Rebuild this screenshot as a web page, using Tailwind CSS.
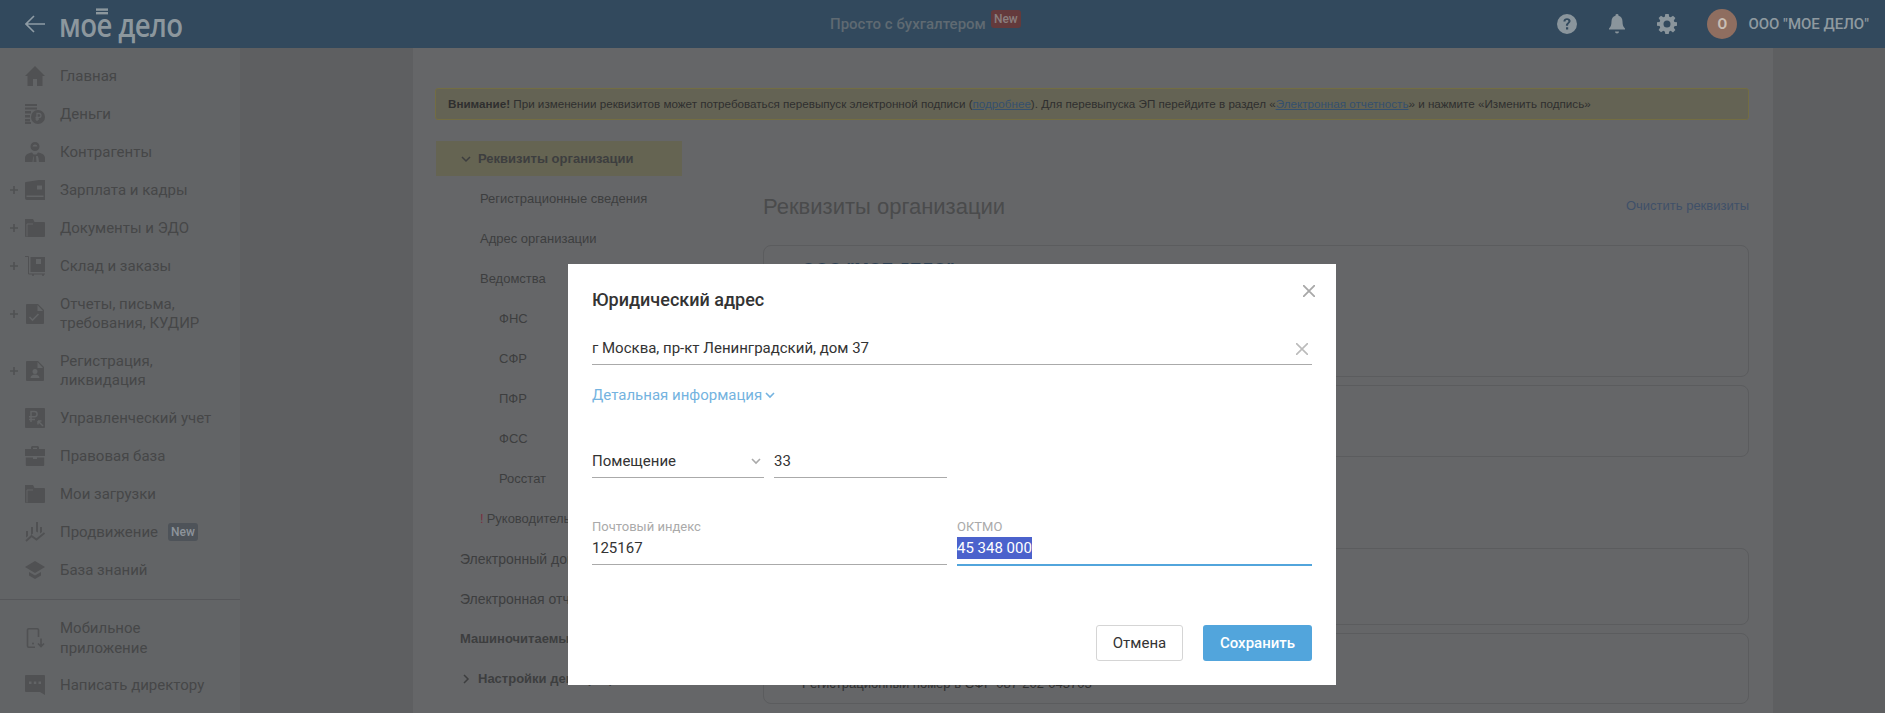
<!DOCTYPE html>
<html lang="ru">
<head>
    <meta charset="UTF-8">
    <title>Реквизиты организации</title>
    <script src="https://cdn.jsdelivr.net/npm/@tailwindcss/browser@4"></script>
</head>
<body class="relative h-screen overflow-hidden bg-[#5e5f61] font-['Roboto',sans-serif]">
    <!-- header -->
    <header class="flex h-12 items-center bg-[#32495d] pr-4">
        <div class="flex w-[830px] items-center pl-[25px]">
            <svg class="h-5 w-5 text-[#8f9ca5]" viewBox="0 0 20 20" fill="none" stroke="currentColor" stroke-width="1.6"><path d="M20 10H1M9 2l-8 8 8 8"/></svg>
            <div class="relative ml-[14px] scale-y-[1.2] text-[27.6px] leading-[46px] font-semibold tracking-[-0.6px] text-[#8c979d] font-['Open_Sans',sans-serif]">мое дело<span class="absolute left-[37px] top-[10px] h-[5px] w-[12px] border-y-2 border-[#8c979d]"></span></div>
        </div>
        <div class="text-[15px] font-medium text-[#5f6a72]">Просто с бухгалтером</div>
        <div class="mb-[10px] ml-[5px] flex h-[18px] w-[30px] items-center justify-center rounded-[3px] bg-[#643a3c] text-xs font-medium text-[#8a7f7f]">New</div>
        <div class="ml-auto flex items-center">
            <svg class="h-5 w-5 text-[#8a959c]" viewBox="0 0 20 20"><path fill="currentColor" fill-rule="evenodd" d="M10 0a10 10 0 1 1 0 20a10 10 0 0 1 0-20ZM9 13.2v2.3h2.2v-2.3ZM10 4.2c-2 0-3.5 1.2-3.6 3.2h2.1c0-.9.6-1.4 1.5-1.4s1.4.5 1.4 1.2c0 1.400-2.500 1.700-2.500 4.500h2.100c0-2.200 2.600-2.400 2.600-4.600c0-1.800-1.500-2.900-3.600-2.900Z"/></svg>
            <svg class="ml-[30px] h-5 w-5 text-[#8a959c]" viewBox="0 0 20 20"><path fill="currentColor" d="M10 0a1.500 1.500 0 0 1 1.500 1.700c2.700.7 4 3 4 5.800c0 4 1 5.500 2.500 7v1H2v-1c1.500-1.500 2.500-3 2.500-7c0-2.800 1.300-5.100 4-5.800A1.500 1.500 0 0 1 10 0ZM8 17.500h4a2 2 0 0 1-4 0Z"/></svg>
            <svg class="ml-[30px] h-5 w-5 text-[#8a959c]" viewBox="0 0 20 20"><path fill="currentColor" fill-rule="evenodd" d="M8.300 0h3.400l.5 2.700l1.500.6l2.300-1.600l2.400 2.400l-1.600 2.300l.6 1.500l2.600.4v3.400l-2.600.5l-.6 1.500l1.600 2.300l-2.400 2.400l-2.300-1.600l-1.500.6l-.5 2.600H8.300l-.5-2.600l-1.500-.6L4 18.300l-2.400-2.400l1.600-2.300l-.6-1.500L0 11.700V8.300l2.600-.4l.6-1.500l-1.600-2.300L4 1.700l2.300 1.600l1.500-.6ZM10 6.500a3.500 3.500 0 1 0 0 7a3.500 3.500 0 0 0 0-7Z"/></svg>
            <div class="ml-[30px] flex h-[30px] w-[30px] items-center justify-center rounded-full bg-[#8f6e60] text-sm font-bold text-[#c9beb5]">О</div>
            <div class="ml-[11px] text-[15px] font-medium text-[#8f9aa0]">ООО "МОЕ ДЕЛО"</div>
        </div>
    </header>

    <div class="flex">
        <!-- sidebar -->
        <aside class="h-[665px] w-60 shrink-0 bg-[#626466] pt-[9px] text-[15px] leading-[19px] text-[#464748]">
            <a class="flex h-[38px] items-center pl-[25px]"><svg class="mr-[15px] h-5 w-5 shrink-0 text-[#505153]" viewBox="0 0 20 20"><path fill="currentColor" d="M10 0l10 10h-2.500v10H12v-7H8v7H2.500V10H0Z"/></svg>Главная</a>
            <a class="flex h-[38px] items-center pl-[25px]"><svg class="mr-[15px] h-5 w-5 shrink-0 text-[#505153]" viewBox="0 0 20 20"><path fill="currentColor" d="M0 0h12v2H0ZM0 3.500h12v2H0ZM0 7h6v2.500H0ZM0 11h5v2.500H0ZM0 15h5v2.500H0ZM0 18h6v2H0Z"/><circle cx="13" cy="13" r="7" fill="currentColor"/><path stroke="#626466" stroke-width="1.300" fill="none" d="M12 17v-7.500h2a1.900 1.900 0 0 1 0 3.900h-3.500M10.500 15H14"/></svg>Деньги</a>
            <a class="flex h-[38px] items-center pl-[25px]"><svg class="mr-[15px] h-5 w-5 shrink-0 text-[#505153]" viewBox="0 0 20 20"><path fill="currentColor" fill-rule="evenodd" d="M10 0a4.500 4.500 0 1 1 0 9a4.500 4.500 0 0 1 0-9ZM10 2.500a2.500 2.500 0 0 0-2.500 2h5a2.500 2.500 0 0 0-2.500-2ZM0 20v-4c0-3 3-5 7-5.500l1.500 2h3l1.500-2c4 .5 7 2.500 7 5.500v4h-6l-.5-4l-.8-2H8.800L8 16l-.5 4Z"/><path fill="currentColor" d="M9 14h2l.5 6h-3Z"/></svg>Контрагенты</a>
            <a class="relative flex h-[38px] items-center pl-[25px]"><svg class="absolute left-[10px] h-2 w-2 text-[#505153]" viewBox="0 0 8 8" stroke="currentColor" stroke-width="1.600"><path d="M4 0v8M0 4h8"/></svg><svg class="mr-[15px] h-5 w-5 shrink-0 text-[#505153]" viewBox="0 0 20 20"><path fill="currentColor" fill-rule="evenodd" d="M1 2l13-2h6v20H2a2 2 0 0 1-2-2V3a1 1 0 0 1 1-1ZM12 5.500h5v4h-5ZM1.500 15.500v1.500h17v-1.500Z"/></svg>Зарплата и кадры</a>
            <a class="relative flex h-[38px] items-center pl-[25px]"><svg class="absolute left-[10px] h-2 w-2 text-[#505153]" viewBox="0 0 8 8" stroke="currentColor" stroke-width="1.600"><path d="M4 0v8M0 4h8"/></svg><svg class="mr-[15px] h-5 w-5 shrink-0 text-[#505153]" viewBox="0 0 20 20"><path fill="currentColor" d="M0 1h8l1.500 3H19a1 1 0 0 1 1 1v13a1 1 0 0 1-1 1H1a1 1 0 0 1-1-1Z"/><path stroke="#626466" fill="none" d="M2 18.500V6h6"/></svg>Документы и ЭДО</a>
            <a class="relative flex h-[38px] items-center pl-[25px]"><svg class="absolute left-[10px] h-2 w-2 text-[#505153]" viewBox="0 0 8 8" stroke="currentColor" stroke-width="1.600"><path d="M4 0v8M0 4h8"/></svg><svg class="mr-[15px] h-5 w-5 shrink-0 text-[#505153]" viewBox="0 0 20 20"><path fill="currentColor" fill-rule="evenodd" d="M5.500 1H20v15H5.500ZM11 3v5h5V3Z"/><path stroke="currentColor" fill="none" d="M0 .5h3.500V18H20"/><circle cx="8" cy="19" r="1" fill="currentColor"/><circle cx="18" cy="19" r="1" fill="currentColor"/></svg>Склад и заказы</a>
            <a class="relative flex h-[57px] items-center pl-[25px]"><svg class="absolute left-[10px] h-2 w-2 text-[#505153]" viewBox="0 0 8 8" stroke="currentColor" stroke-width="1.600"><path d="M4 0v8M0 4h8"/></svg><svg class="mr-[15px] h-5 w-5 shrink-0 text-[#505153]" viewBox="0 0 20 20"><path fill="currentColor" fill-rule="evenodd" d="M2 0h11l6 6v13a1 1 0 0 1-1 1H2a1 1 0 0 1-1-1V1a1 1 0 0 1 1-1ZM12.500 1v6h5.500Z"/><path stroke="#626466" stroke-width="1.600" fill="none" d="M4.500 13l3 3l6-6"/></svg><span>Отчеты, письма,<br>требования, КУДИР</span></a>
            <a class="relative flex h-[57px] items-center pl-[25px]"><svg class="absolute left-[10px] h-2 w-2 text-[#505153]" viewBox="0 0 8 8" stroke="currentColor" stroke-width="1.600"><path d="M4 0v8M0 4h8"/></svg><svg class="mr-[15px] h-5 w-5 shrink-0 text-[#505153]" viewBox="0 0 20 20"><path fill="currentColor" fill-rule="evenodd" d="M2 0h11l6 6v13a1 1 0 0 1-1 1H2a1 1 0 0 1-1-1V1a1 1 0 0 1 1-1ZM12.500 1v6h5.500ZM10 8a2.500 2.500 0 1 0 0 5a2.500 2.500 0 0 0 0-5ZM5.500 17h9c0-2-2-3.500-4.500-3.500s-4.500 1.500-4.500 3.500Z"/></svg><span>Регистрация,<br>ликвидация</span></a>
            <a class="flex h-[38px] items-center pl-[25px]"><svg class="mr-[15px] h-5 w-5 shrink-0 text-[#505153]" viewBox="0 0 20 20"><path fill="currentColor" d="M1 0h18a1 1 0 0 1 1 1v18a1 1 0 0 1-1 1H1a1 1 0 0 1-1-1V1a1 1 0 0 1 1-1Z"/><path stroke="#626466" stroke-width="1.500" fill="none" d="M6 14V3.500h3.500a2.600 2.600 0 0 1 0 5.200H4M4 11.500h6M13 13l5 5M13 13h3.500M13 13v3.500"/></svg>Управленческий учет</a>
            <a class="flex h-[38px] items-center pl-[25px]"><svg class="mr-[15px] h-5 w-5 shrink-0 text-[#505153]" viewBox="0 0 20 20"><path fill="currentColor" fill-rule="evenodd" d="M6 3V1.500A1.500 1.500 0 0 1 7.500 0h5A1.500 1.500 0 0 1 14 1.500V3h6v7H0V3ZM8 1.800V3h4V1.800ZM.8 11.500H8V13h4v-1.500h7.200V19a1 1 0 0 1-1 1H1.800a1 1 0 0 1-1-1Z"/></svg>Правовая база</a>
            <a class="flex h-[38px] items-center pl-[25px]"><svg class="mr-[15px] h-5 w-5 shrink-0 text-[#505153]" viewBox="0 0 20 20"><path fill="currentColor" d="M0 1h8l1.500 3H19a1 1 0 0 1 1 1v13a1 1 0 0 1-1 1H1a1 1 0 0 1-1-1Z"/><path stroke="#626466" fill="none" d="M2 18.500V6h6"/></svg>Мои загрузки</a>
            <a class="flex h-[38px] items-center pl-[25px]"><svg class="mr-[15px] h-5 w-5 shrink-0 text-[#505153]" viewBox="0 0 20 20"><path fill="currentColor" d="M1 9h2v5l-2 1.500ZM6 5h2v6.500l-2 1.500ZM11 0h2v10.500l-2-1ZM15 5h2v5l-2 1.500Z"/><path stroke="currentColor" stroke-width="1.800" fill="none" d="M1 19l5.500-5l5 3.500L19.500 11"/></svg>Продвижение<span class="ml-[10px] flex h-[18px] w-[30px] items-center justify-center rounded-[3px] bg-[#4e5359] text-xs font-medium text-[#8d939b]">New</span></a>
            <a class="flex h-[38px] items-center pl-[25px]"><svg class="mr-[15px] h-5 w-5 shrink-0 text-[#505153]" viewBox="0 0 20 20"><path fill="currentColor" d="M10 1L20 7l-10 6L0 7ZM4 12l6 3.500l6-3.500v3.500L10 19l-6-3.500Z"/></svg>База знаний</a>
            <div class="my-[10px] h-px bg-[#56575a]"></div>
            <a class="flex h-14 items-center pl-[25px] leading-5"><svg class="mr-[15px] h-5 w-5 shrink-0 text-[#505153]" viewBox="0 0 20 20"><path stroke="currentColor" stroke-width="1.600" fill="none" d="M13.500 9V2a1.200 1.200 0 0 0-1.200-1.200H3.700A1.200 1.200 0 0 0 2.500 2v16a1.200 1.200 0 0 0 1.200 1.200H10M16 10.500v8M13 15.500l3 3l3-3"/><circle cx="8" cy="15.500" r="1" fill="currentColor"/></svg><span>Мобильное<br>приложение</span></a>
            <a class="flex h-[38px] items-center pl-[25px]"><svg class="mr-[15px] h-5 w-5 shrink-0 text-[#505153]" viewBox="0 0 20 20"><path fill="currentColor" fill-rule="evenodd" d="M1 0h18a1 1 0 0 1 1 1v19l-5-3H1a1 1 0 0 1-1-1V1a1 1 0 0 1 1-1ZM4 6.500v2.500h2.500V6.500ZM8.800 6.500v2.500h2.500V6.500ZM13.500 6.500v2.500H16V6.500Z"/></svg>Написать директору</a>
        </aside>

        <!-- main column -->
        <main class="ml-[173px] h-[665px] w-[1360px] overflow-hidden bg-[#656668] pl-[22px] pr-6 pt-10 font-['Liberation_Sans',sans-serif]">
            <div class="flex h-8 items-center rounded-[3px] border border-[#736d42] bg-[#646354] pl-3 text-[11.65px] text-[#2f2f2f]"><b>Внимание!</b>&nbsp;При изменении реквизитов может потребоваться перевыпуск электронной подписи (<a class="text-[#34506e] underline">подробнее</a>). Для перевыпуска ЭП перейдите в раздел «<a class="text-[#34506e] underline">Электронная отчетность</a>» и нажмите «Изменить подпись»</div>
            <div class="mt-[21px] flex">
                <nav class="w-[328px] shrink-0 text-[13px] text-[#3d3e3f]">
                    <div class="ml-px flex h-[35px] w-[246px] items-center bg-[#656452] pl-[25px] font-bold">
                        <svg class="mr-[7px] h-2 w-2.5" viewBox="0 0 10 8" fill="none" stroke="#3d3e3f" stroke-width="1.500"><path d="M1 2l4 4l4-4"/></svg>Реквизиты организации
                    </div>
                    <div class="mt-[3px] flex h-10 items-center pl-[45px]">Регистрационные сведения</div>
                    <div class="flex h-10 items-center pl-[45px]">Адрес организации</div>
                    <div class="flex h-10 items-center pl-[45px]">Ведомства</div>
                    <div class="flex h-10 items-center pl-[64px]">ФНС</div>
                    <div class="flex h-10 items-center pl-[64px]">СФР</div>
                    <div class="flex h-10 items-center pl-[64px]">ПФР</div>
                    <div class="flex h-10 items-center pl-[64px]">ФСС</div>
                    <div class="flex h-10 items-center pl-[64px]">Росстат</div>
                    <div class="flex h-10 items-center pl-[45px]"><span class="mr-[3px] text-[#7a3040]">!</span>Руководитель</div>
                    <div class="flex h-10 items-center pl-[25px] text-sm">Электронный документооборот</div>
                    <div class="flex h-10 items-center pl-[25px] text-sm">Электронная отчетность</div>
                    <div class="flex h-10 items-center pl-[25px] font-bold">Машиночитаемые доверенности</div>
                    <div class="flex h-10 items-center pl-[27px] font-bold">
                        <svg class="mr-[8px] h-2.5 w-2" viewBox="0 0 8 10" fill="none" stroke="#3d3e3f" stroke-width="1.500"><path d="M2 1l4 4l-4 4"/></svg>Настройки декларации
                    </div>
                </nav>
                <section class="min-w-0 grow">
                    <div class="mt-[50px] flex h-[30px] items-center justify-between">
                        <h1 class="text-[22px] text-[#4a4b4c]">Реквизиты организации</h1>
                        <a class="text-[13px] text-[#3f5068]">Очистить реквизиты</a>
                    </div>
                    <div class="mt-6 h-[132px] rounded-lg border border-[#5b5c5e] pl-[38px] pt-[11px] text-[17px] font-bold text-[#2c3f52]">ООО "МОЕ ДЕЛО"</div>
                    <div class="mt-2 h-[72px] rounded-lg border border-[#5b5c5e]"></div>
                    <div class="mt-2 h-[75px] rounded-lg"></div>
                    <div class="mt-2 h-[77px] rounded-lg border border-[#5b5c5e]"></div>
                    <div class="mt-2 h-[71px] rounded-lg border border-[#5b5c5e] pl-[38px] pt-10 text-[13px] text-[#2f2f2f]">Регистрационный номер в СФР 087-202-043703</div>
                </section>
            </div>
        </main>
    </div>

    <!-- modal -->
    <div class="absolute left-[568px] top-[264px] h-[421px] w-[768px] bg-white px-6 pt-6">
        <svg class="absolute right-[21px] top-[21px] h-3 w-3 text-[#a8a8a8]" viewBox="0 0 12 12" stroke="currentColor" stroke-width="1.800"><path d="M0 0l12 12M12 0L0 12"/></svg>
        <h2 class="flex h-6 items-center text-lg font-medium text-[#333]">Юридический адрес</h2>
        <div class="mt-6 flex h-[29px] items-center justify-between border-b border-[#aaa] pb-[3px] text-[15px] text-[#333]">г Москва, пр-кт Ленинградский, дом 37
            <svg class="mr-[4px] h-3 w-3 text-[#bbb]" viewBox="0 0 12 12" stroke="currentColor" stroke-width="1.600"><path d="M0 0l12 12M12 0L0 12"/></svg>
        </div>
        <a class="mt-5 flex h-5 items-center text-[15px] text-[#74b3e0]">Детальная информация
            <svg class="ml-[3px] h-2 w-2.5" viewBox="0 0 10 8" fill="none" stroke="#74b3e0" stroke-width="1.600"><path d="M1 2l4 4l4-4"/></svg>
        </a>
        <div class="mt-11 flex gap-2.5 text-[15px] text-[#333]">
            <div class="flex h-[29px] w-[172px] items-center justify-between border-b border-[#aaa] pb-1 pr-[3px]">Помещение
                <svg class="h-2 w-2.5" viewBox="0 0 10 8" fill="none" stroke="#aaa" stroke-width="1.600"><path d="M1 2l4 4l4-4"/></svg>
            </div>
            <div class="flex h-[29px] w-[173px] items-center border-b border-[#aaa] pb-1">33</div>
        </div>
        <div class="mt-10 grid h-12 grid-cols-2 gap-2.5 text-[15px] text-[#333]">
            <div>
                <div class="flex h-[18px] items-center text-[13px] text-[#aaa]">Почтовый индекс</div>
                <div class="flex h-[29px] items-center border-b border-[#aaa] pb-1">125167</div>
            </div>
            <div>
                <div class="flex h-[18px] items-center text-[13px] text-[#aaa]">ОКТМО</div>
                <div class="flex h-[30px] items-center border-b-2 border-[#52a5dc] pb-1"><span class="bg-[#4b62cc] text-white">45 348 000</span></div>
            </div>
        </div>
        <div class="mt-[59px] flex justify-end gap-5">
            <button class="h-9 w-[87px] rounded-[3px] border border-[#d5d5d5] bg-white text-[15px] text-[#333]">Отмена</button>
            <button class="h-9 w-[109px] rounded-[3px] bg-[#52a5dc] text-[15px] font-medium text-white">Сохранить</button>
        </div>
    </div>
</body>
</html>
